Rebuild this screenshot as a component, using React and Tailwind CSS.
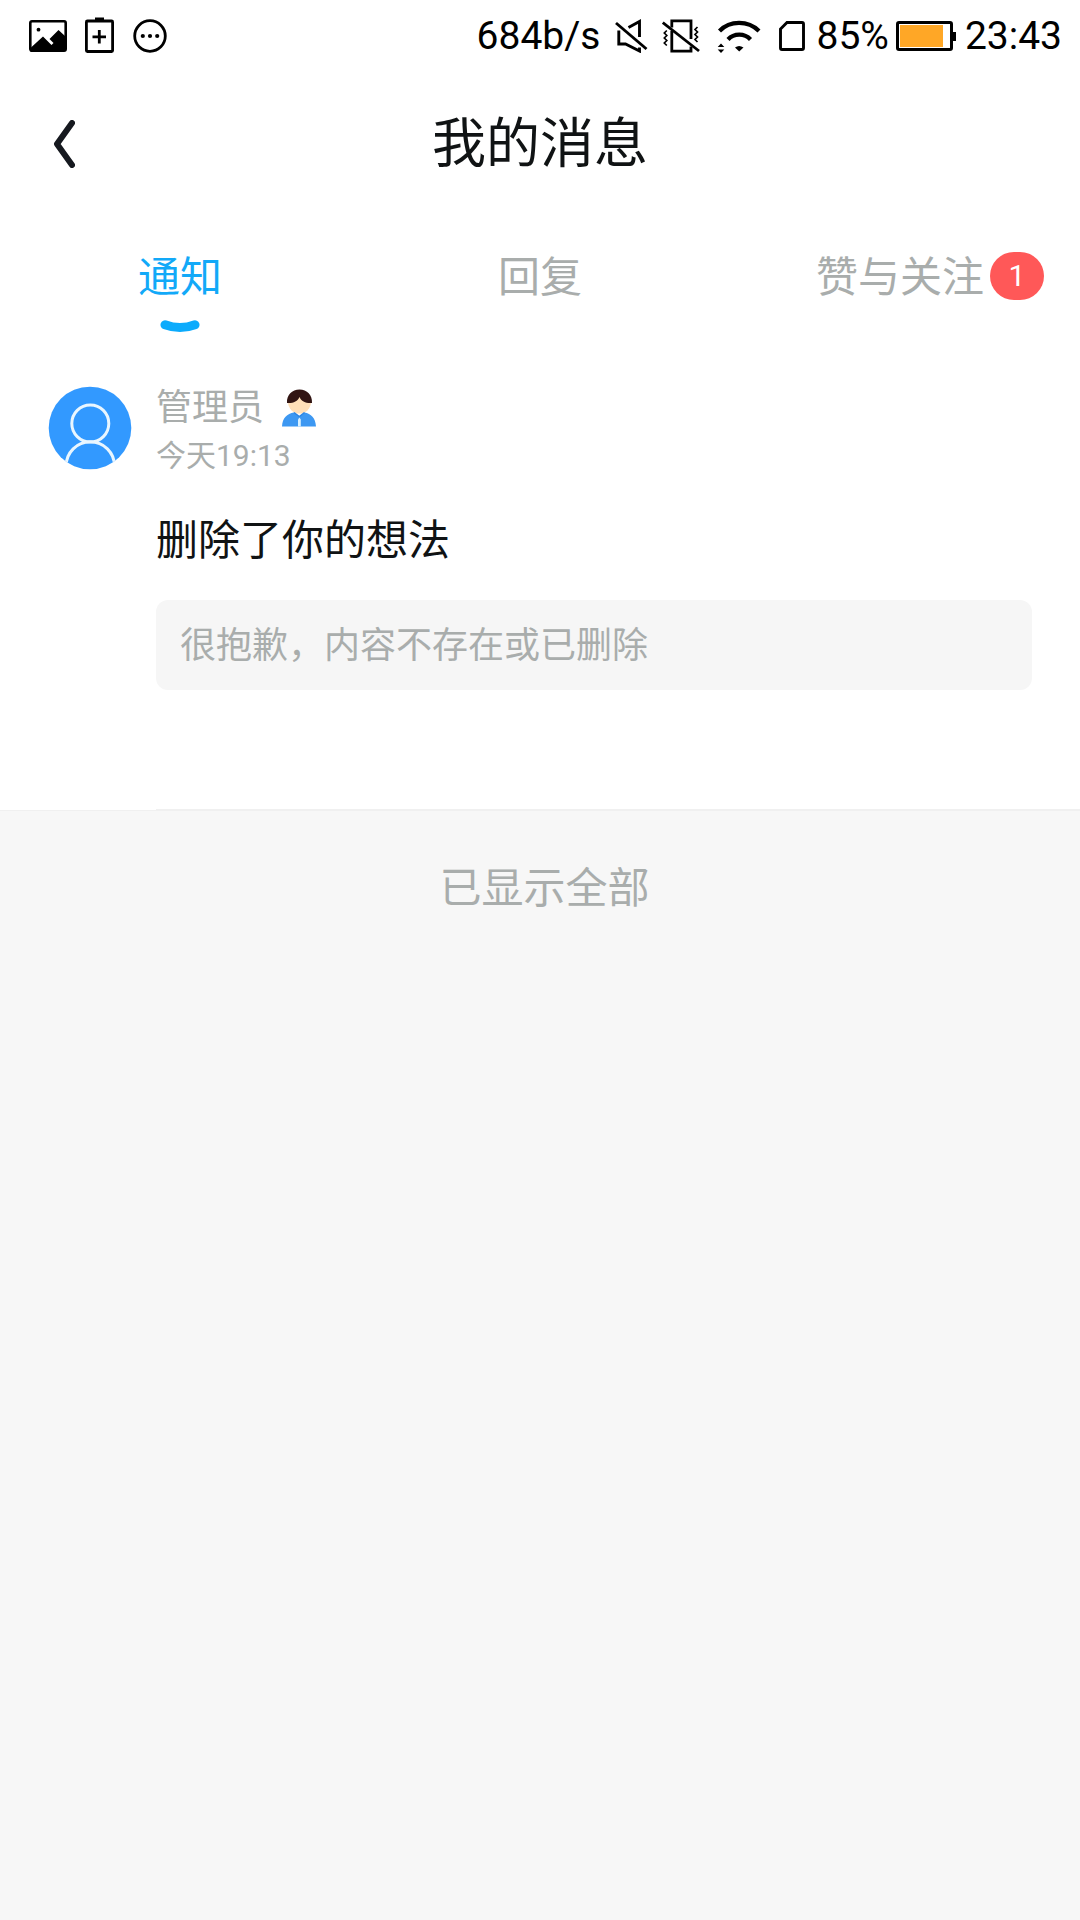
import React from 'react';

const tabs = [
  { label: '通知', active: true },
  { label: '回复' },
  { label: '赞与关注', badge: 1 }
];

const messages = [
  {
    name: '管理员',
    time: '今天19:13',
    content: '删除了你的想法',
    quote: '很抱歉，内容不存在或已删除'
  }
];

function StatusBar() {
  return (
    <div className="flex h-[72px] items-center pl-[29px] pr-[18px] text-[39px] leading-[72px] text-black">
      {/* Notification icons */}
      <svg className="h-8 w-[38px]" viewBox="0 0 38 32" fill="none">
        <rect x="1.3" y="1.3" width="35.4" height="29.4" rx="1.6" stroke="black" strokeWidth="2.6" />
        <circle cx="9.5" cy="9.7" r="1.9" fill="black" />
        <path d="M2 27.5L14 16.5L22.5 25L24.5 23L20.5 19L29.5 10L36 16V31H2Z" fill="black" />
      </svg>
      <svg className="mb-[2px] ml-[18px] h-[36px] w-[29px]" viewBox="0 0 29 36" fill="none">
        <rect x="1.4" y="4" width="26.200" height="30.500" rx="1" stroke="black" strokeWidth="2.800" />
        <path d="M10 0.500H19V4H10Z" fill="black" />
        <path d="M14.3 13V26.500M7.5 19.800H21" stroke="black" strokeWidth="2.8" />
      </svg>
      <svg className="ml-[19px] h-[34px] w-[34px]" viewBox="0 0 34 34" fill="none">
        <circle cx="17" cy="17" r="15.3" stroke="black" strokeWidth="2.8" />
        <circle cx="9.8" cy="17" r="2.1" fill="black" />
        <circle cx="17" cy="17" r="2.1" fill="black" />
        <circle cx="24.2" cy="17" r="2.1" fill="black" />
      </svg>

      <span className="ml-auto">684b/s</span>
      {/* Muted */}
      <svg className="ml-[15px] h-[34px] w-[33px]" viewBox="0 0 33 34" fill="none" stroke="black" strokeWidth="2.9">
        <path d="M1 4L31.5 30" />
        <path d="M13.5 8.5L24.5 2.5V18" />
        <path d="M3.8 11.5V25H10.5L24.5 32V28.5" />
      </svg>
      {/* Vibration off */}
      <svg className="ml-[14px] h-[34px] w-[38px]" viewBox="0 0 38 34" fill="none" stroke="black" strokeWidth="2.8">
        <path d="M0.8 3.5L37 32" />
        <path d="M9.8 12V32.2H29V27.5" />
        <path d="M9.8 8.5V1.8H29V20" />
        <path d="M4.8 11.5L2.3 14L4.8 16.5L2.3 19L4.8 21.5L2.3 24L4.8 26.5" strokeWidth="1.7" />
        <path d="M35.5 8L33 10.5L35.5 13L33 15.5L35.5 18L33 20.5L35.5 23" strokeWidth="1.7" />
      </svg>
      {/* Wifi */}
      <svg className="ml-[16px] h-[34px] w-[45px]" viewBox="0 0 45 34" fill="none">
        <path d="M3.5 12C14 1.2 32 1.2 43 12" stroke="black" strokeWidth="4.2" />
        <path d="M12 20.5C18 14 28.5 14 34.5 20.5" stroke="black" strokeWidth="4.2" />
        <path d="M19 28.5Q23 25.5 27.5 28.5L23.2 32.5Z" fill="black" />
        <path d="M1.7 28L5 24.5L8.3 28ZM1.7 30.5H8.3L5 34Z" fill="black" />
      </svg>
      {/* Sim */}
      <svg className="ml-[18px] h-[30px] w-[26px]" viewBox="0 0 26 30" fill="none">
        <path d="M8 1.5H23Q24.5 1.5 24.5 3V27Q24.5 28.5 23 28.5H3Q1.500 28.5 1.500 27V8Z" stroke="black" strokeWidth="2.9" />
      </svg>
      <span className="ml-[11px]">85%</span>
      <svg className="ml-[7px] h-[30px] w-[60px]" viewBox="0 0 60 30" fill="none">
        <rect x="1.5" y="1.5" width="54" height="27" rx="1.5" stroke="black" strokeWidth="3" />
        <rect x="4" y="4" width="43" height="22" fill="#ffa726" />
        <path d="M56 11H60V20H56Z" fill="black" />
      </svg>
      <span className="ml-[9px]">23:43</span>
    </div>
  );
}

function Header() {
  return (
    <header className="flex h-36 items-center px-[53px] text-[#101314]">
      <button className="flex w-12">
        <svg className="h-12 w-[22px]" viewBox="0 0 22 48" fill="none">
          <path d="M19 3L4 24L19 45" stroke="#16191f" strokeWidth="6" strokeLinecap="round" strokeLinejoin="round" />
        </svg>
      </button>
      <h1 className="flex-1 pt-px text-center text-[54px] leading-[60px]">我的消息</h1>
      <div className="w-12"></div>
    </header>
  );
}

function Tabs() {
  return (
    <nav className="grid h-[146px] grid-cols-3 pt-8 text-[42px] leading-[60px] text-[#a9adac]">
      {tabs.map((tab) => (
        <div key={tab.label} className="flex flex-col items-center">
          <div className={tab.active ? 'relative text-[#12a9f8]' : 'relative'}>
            {tab.label}
            {tab.badge && (
              <span className="absolute left-full top-1 ml-[6px] h-12 w-[54px] rounded-[24px] bg-[#ff5858] text-center text-[30px] leading-[48px] text-white">
                {tab.badge}
              </span>
            )}
          </div>
          {tab.active && (
            <svg className="mt-3 h-[13px] w-10" viewBox="0 0 40 13" fill="none">
              <path d="M5 4.8Q20 10.4 35 4.8" stroke="#0cabfc" strokeWidth="9" strokeLinecap="round" />
            </svg>
          )}
        </div>
      ))}
    </nav>
  );
}

function Avatar() {
  return (
    <svg className="h-[84px] w-[84px] shrink-0" viewBox="0 0 84 84" fill="none">
      <defs>
        <clipPath id="avatar">
          <circle cx="42" cy="42" r="41.3" />
        </clipPath>
      </defs>
      <g clipPath="url(#avatar)">
        <rect width="84" height="84" fill="#3299ff" />
        <circle cx="42.3" cy="37.5" r="18.5" stroke="#e9f6ff" strokeWidth="3" />
        <circle cx="42.3" cy="80" r="24.2" stroke="#e9f6ff" strokeWidth="3" />
      </g>
    </svg>
  );
}

function AdminIcon() {
  return (
    <svg className="h-[38px] w-[34px]" viewBox="0 0 34 38">
      <circle cx="17.5" cy="13" r="11.5" fill="#ffdfb8" />
      <path d="M5 14C4.5 6 10 0.5 17.5 0.5S30.5 6 30 14C24 14.5 19.5 12.5 17.5 8C15.5 12.5 11 14.5 5 14Z" fill="#321513" />
      <path d="M0 37.5C0.5 29 5 24.500 12 23.500L17.300 27.500L22.500 23.500C29 24.500 33.500 29 34 37.5Z" fill="#3d98f2" />
      <path d="M12 23.500L17.3 27.500L22.500 23.500" fill="none" stroke="#2c86e4" strokeWidth="1.500" />
      <path d="M16 30.500L17.400 28.500L18.800 30.500V37.5H16Z" fill="#d9f1ff" />
    </svg>
  );
}

function Message({ item }) {
  return (
    <div className="flex h-[449px] border-b border-[#f0f0f0] bg-white pl-12 pt-[24px]">
      <Avatar />
      <div className="ml-6 flex flex-1 flex-col border-b border-[#f0f0f0]">
        <div className="flex h-[44px] items-center gap-[18px] text-[36px] leading-[44px] text-[#a9adac]">
          <span>{item.name}</span>
          <AdminIcon />
        </div>
        <div className="mt-1 text-[30px] leading-[44px] text-[#a9adac]">{item.time}</div>
        <p className="mt-[33px] text-[42px] leading-[60px] text-[#101314]">{item.content}</p>
        <div className="mr-12 mt-[29px] h-[90px] rounded-xl bg-[#f6f6f6] px-6 text-[36px] leading-[92px] text-[#a9adac]">
          {item.quote}
        </div>
      </div>
    </div>
  );
}

export default function App() {
  return (
    <div className="min-h-screen bg-[#f7f7f7] font-['Roboto','Noto_Sans_CJK_SC',sans-serif]">
      <div className="bg-white">
        <StatusBar />
        <Header />
        <Tabs />
      </div>
      {messages.map((item) => (
        <Message key={item.time} item={item} />
      ))}
      <div className="pl-[9px] pt-12 text-center text-[42px] leading-[60px] text-[#a9adac]">已显示全部</div>
    </div>
  );
}
